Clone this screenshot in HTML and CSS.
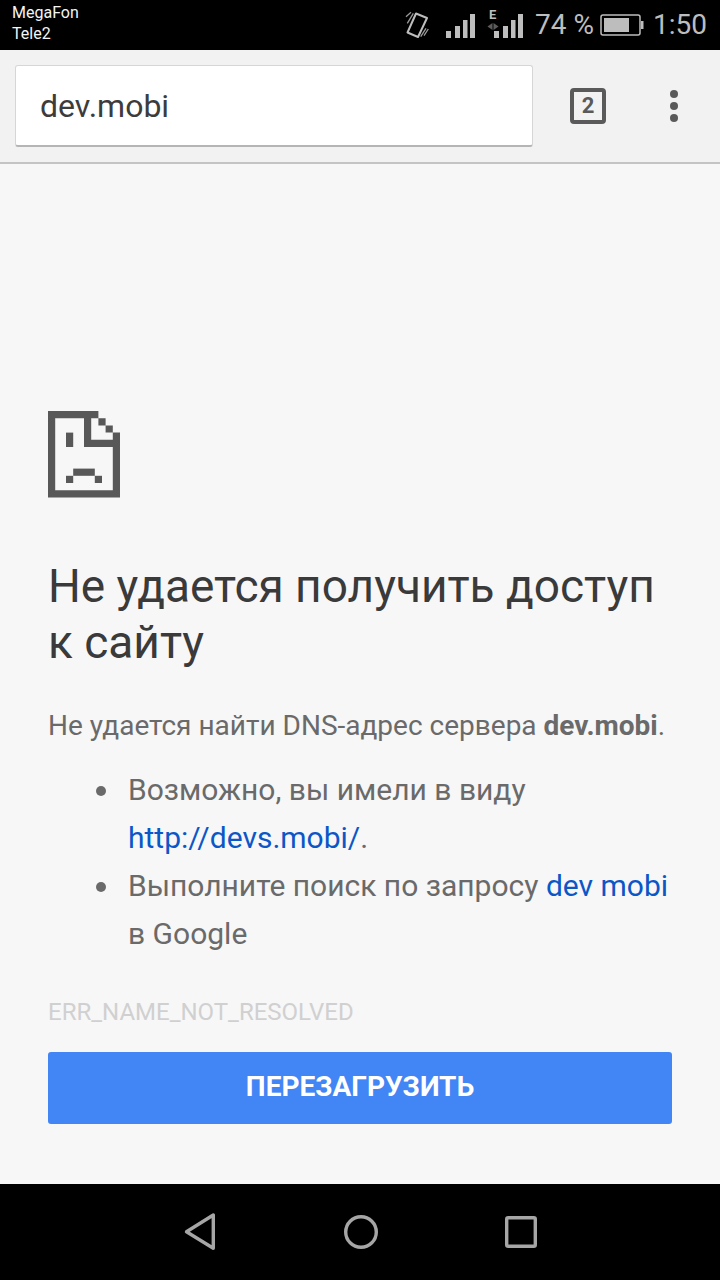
FILE: index.html
```html
<!DOCTYPE html>
<html>

	<head>
		<meta charset="utf-8" />
		<title>dev.mobi</title>
		<link rel="stylesheet" href="styles.css">
	</head>

	<body>
		<div class="status-bar">
			<div class="carriers">
				<span>MegaFon</span>
				<span>Tele2</span>
			</div>
			<div class="status-right">
				<svg class="icon-vibrate" width="26" height="28" viewBox="0 0 26 28">
					<path d="M12 2.500 L23 7 L14 26 L3.500 21.500 Z" fill="none" stroke="#bdbdbd" stroke-width="2" stroke-linejoin="round" />
					<path d="M2 5.700 L7 1.300 M3.300 12.300 L9.300 2.300 M24.300 18 L20 24.700 M22 17.300 L16.700 25.700" fill="none" stroke="#9a9a9a" stroke-width="1.300" />
				</svg>
				<svg class="icon-signal" width="29" height="24" viewBox="0 0 29 24">
					<rect x="0" y="17" width="5" height="7" fill="#bdbdbd" />
					<rect x="9" y="12" width="5" height="12" fill="#bdbdbd" />
					<rect x="17" y="6" width="4.500" height="18" fill="#bdbdbd" />
					<rect x="24" y="0" width="5" height="24" fill="#bdbdbd" />
				</svg>
				<div class="signal-two">
					<span class="net-type">E</span>
					<svg width="36" height="24" viewBox="0 0 36 24">
						<path d="M5.500 9 L0.500 12.500 L5.500 16 Z" fill="#5c5c5c" />
						<path d="M6.500 9 L11.500 12.500 L6.500 16 Z" fill="#5c5c5c" />
						<rect x="7" y="17" width="5" height="7" fill="#bdbdbd" />
						<rect x="16" y="12" width="5" height="12" fill="#bdbdbd" />
						<rect x="24" y="6" width="4.500" height="18" fill="#bdbdbd" />
						<rect x="31" y="0" width="5" height="24" fill="#bdbdbd" />
					</svg>
				</div>
				<span class="status-text percent">74 %</span>
				<svg class="icon-battery" width="44" height="22" viewBox="0 0 44 22">
					<rect x="1" y="1" width="39" height="20" rx="2" fill="none" stroke="#bdbdbd" stroke-width="1.500" />
					<rect x="4" y="4" width="25" height="14" fill="#bdbdbd" />
					<rect x="41" y="7" width="2.500" height="8" fill="#bdbdbd" />
				</svg>
				<span class="status-text time">1:50</span>
			</div>
		</div>

		<div class="toolbar">
			<div class="url-box">dev.mobi</div>
			<div class="tab-count">2</div>
			<div class="menu-dots">
				<i></i>
				<i></i>
				<i></i>
			</div>
		</div>

		<div class="content">
			<svg class="sad-page" width="72" height="87" viewBox="0 0 72 87">
				<path fill="#585858" d="M0 0H50.400V7.200H57.600V14.400H64.800V21.600H72V86.400H0Z M7.200 7.200V79.200H64.800V36H36V7.200Z M43.200 7.200V28.800H64.800V21.600H57.600V14.400H50.400V7.200Z" fill-rule="evenodd" />
				<rect fill="#585858" x="18" y="21.600" width="7.200" height="14.400" />
				<rect fill="#585858" x="25.200" y="57.600" width="21.600" height="7.200" />
				<rect fill="#585858" x="18" y="64.800" width="7.200" height="7.200" />
				<rect fill="#585858" x="46.800" y="64.800" width="7.200" height="7.200" />
			</svg>

			<h1 class="title">Не удается получить доступ к сайту</h1>
			<p class="summary">Не удается найти DNS-адрес сервера <b>dev.mobi</b>.</p>
			<ul class="hints">
				<li>Возможно, вы имели в виду <a href="#">http://devs.mobi/</a>.</li>
				<li>Выполните поиск по запросу <a href="#">dev mobi</a> в Google</li>
			</ul>
			<div class="err-code">ERR_NAME_NOT_RESOLVED</div>
			<div class="reload">ПЕРЕЗАГРУЗИТЬ</div>
		</div>

		<div class="nav-bar">
			<svg width="34" height="40" viewBox="0 0 34 40">
				<path d="M30.300 3 V36.300 L3.500 19.800 Z" fill="none" stroke="#a6a6a6" stroke-width="3.400" stroke-linejoin="round" />
			</svg>
			<svg width="36" height="36" viewBox="0 0 36 36">
				<circle cx="18" cy="18" r="15.300" fill="none" stroke="#a6a6a6" stroke-width="3.400" />
			</svg>
			<svg width="32" height="32" viewBox="0 0 32 32">
				<rect x="1.700" y="1.700" width="28.600" height="28.600" rx="1.500" fill="none" stroke="#a6a6a6" stroke-width="3.400" />
			</svg>
		</div>
	</body>

</html>
```

FILE: styles.css
```css
body {
	margin: 0;
	width: 720px;
	height: 1280px;
	overflow: hidden;
	background-color: #f7f7f7;
	font-family: Roboto, "Noto Sans", sans-serif;
	display: flex;
	flex-direction: column;
}

.status-bar {
	height: 50px;
	flex: none;
	background-color: #000;
	display: flex;
	justify-content: space-between;
	align-items: center;
}
.carriers {
	padding-left: 12px;
	padding-bottom: 5px;
	display: flex;
	flex-direction: column;
	color: #f4f4f4;
	font-size: 16px;
	line-height: 21px;
}
.status-right {
	display: flex;
	align-items: center;
	padding-right: 13px;
}
.icon-vibrate {
	margin-right: 16px;
}
.icon-signal {
	margin-top: 2px;
	margin-right: 12px;
}
.signal-two {
	position: relative;
	display: flex;
	margin-top: 2px;
	margin-right: 12px;
}
.net-type {
	position: absolute;
	left: 2px;
	top: -5px;
	color: #bdbdbd;
	font-size: 13px;
	font-weight: 700;
	line-height: 12px;
}
.status-text {
	color: #bdbdbd;
	font-size: 28px;
	line-height: 32px;
}
.percent {
	margin-right: 6px;
}
.icon-battery {
	margin-right: 9px;
}

.toolbar {
	height: 114px;
	flex: none;
	box-sizing: border-box;
	background-color: #f2f2f2;
	border-bottom: 2px solid #c4c4c4;
	display: flex;
	align-items: flex-start;
	padding: 15px 0 0 15px;
}
.url-box {
	width: 518px;
	height: 82px;
	box-sizing: border-box;
	background-color: #fff;
	border: 1px solid #d6d6d6;
	border-bottom: 2px solid #b5b5b5;
	border-radius: 3px;
	padding-left: 24px;
	color: #3c3c3c;
	font-size: 32px;
	line-height: 80px;
}
.tab-count {
	width: 36px;
	height: 36px;
	box-sizing: border-box;
	margin: 23px 0 0 37px;
	border: 4px solid #5a5a5a;
	border-radius: 4px;
	color: #5a5a5a;
	font-size: 22px;
	font-weight: 700;
	line-height: 28px;
	text-align: center;
}
.menu-dots {
	margin: 25px 0 0 64px;
	display: flex;
	flex-direction: column;
	gap: 4px;
}
.menu-dots i {
	width: 8px;
	height: 8px;
	border-radius: 50%;
	background-color: #5a5a5a;
}

.content {
	flex: 1;
	padding: 247px 48px 0;
	display: flex;
	flex-direction: column;
	align-items: flex-start;
}
.sad-page {
	display: block;
}
.title {
	margin: 60px 0 0;
	color: #3a3a3a;
	font-size: 46px;
	font-weight: 400;
	line-height: 56px;
}
.summary {
	margin: 32px 0 0;
	color: #6a6a6a;
	font-size: 28px;
	line-height: 48px;
	white-space: nowrap;
}
.hints {
	margin: 16px 0 0;
	padding-left: 80px;
	list-style: none;
	color: #6a6a6a;
	font-size: 30px;
	line-height: 48px;
}
.hints li {
	position: relative;
}
.hints li::before {
	content: "";
	position: absolute;
	left: -32px;
	top: 20px;
	width: 10px;
	height: 10px;
	border-radius: 50%;
	background-color: #6a6a6a;
}
.hints a {
	color: #0b57c8;
	text-decoration: none;
}
.err-code {
	margin-top: 38px;
	color: #d0d0d0;
	font-size: 24px;
	line-height: 32px;
}
.reload {
	width: 624px;
	height: 72px;
	margin-top: 24px;
	background-color: #4285f4;
	border-radius: 3px;
	color: #fff;
	font-size: 28px;
	font-weight: 700;
	line-height: 70px;
	text-align: center;
}

.nav-bar {
	height: 96px;
	flex: none;
	background-color: #000;
	display: flex;
	justify-content: space-between;
	align-items: center;
	padding: 0 183px 0 183px;
}
```
